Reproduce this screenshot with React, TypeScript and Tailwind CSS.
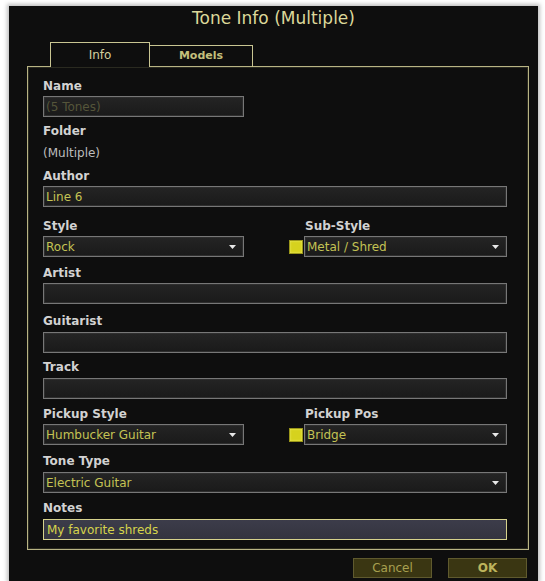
import React from "react";

const font = { fontFamily: '"DejaVu Sans", Verdana, sans-serif' };

function Label({ children, className = "" }: { children: React.ReactNode; className?: string }) {
  return (
    <div className={`h-[14px] leading-[14px] text-[12px] font-bold text-[#d2d2d2] ${className}`}>{children}</div>
  );
}

function Field({
  value = "",
  select = false,
  className = "",
  textClass = "text-[#c4c354]",
}: {
  value?: string;
  select?: boolean;
  className?: string;
  textClass?: string;
}) {
  return (
    <div
      className={`relative h-[21px] border border-[#777] bg-gradient-to-b from-[#242424] to-[#1a1a1a] shadow-[inset_0_0_0_1px_#2e2e2e] flex items-center pl-[2px] ${className}`}
    >
      <span className={`text-[12px] leading-[14px] ${textClass}`}>{value}</span>
      {select && (
        <svg className="absolute right-[7px] top-[8px]" width="7" height="4" viewBox="0 0 7 4">
          <polygon points="0,0 7,0 3.5,4" fill="#e8e8e8" />
        </svg>
      )}
    </div>
  );
}

function Check() {
  return (
    <div className="w-[14px] h-[14px] mr-[1px] bg-[#d6d21e] border border-[#9a961a] shadow-[inset_0_0_2px_#f4f27a] shrink-0" />
  );
}

export default function App() {
  return (
    <div className="w-[545px] h-[581px] bg-white pl-[9px] pt-[6px] flex overflow-hidden" style={font}>
      <div className="w-[529px] h-[575px] bg-[#0e0e0e] shadow-[0_0_4px_2px_rgba(0,0,0,0.25)] flex flex-col pl-[18px]">
        <div className="h-[25px] leading-[25px] text-center text-[17px] text-[#dcd89a] pr-[18px]">
          Tone Info (Multiple)
        </div>
        <div className="flex items-end ml-[23px] mt-[11px] relative z-10 -mb-px">
          <div className="w-[100px] h-[25px] border border-b-0 border-[#c9c592] bg-[#0e0e0e] text-center text-[12px] leading-[24px] text-[#d4d09e]">
            Info
          </div>
          <div className="w-[103px] h-[22px] border-t border-r border-[#c9c592] text-center text-[11px] leading-[20px] font-bold text-[#c4c07c]">
            Models
          </div>
        </div>
        <div className="w-[502px] h-[484px] border border-[#b8b484] shadow-[inset_0_0_0_1px_#2a2a20] bg-[#0e0e0e] pl-[15px] pr-[21px] pt-[12px] flex flex-col">
          <Label>Name</Label>
          <Field className="w-[201px] mt-[3px]" value="(5 Tones)" textClass="text-[#55553a]" />
          <Label className="mt-[7px]">Folder</Label>
          <div className="h-[14px] leading-[14px] text-[12px] text-[#bdbdbd] mt-[8px]">(Multiple)</div>
          <Label className="mt-[9px]">Author</Label>
          <Field className="mt-[3px]" value="Line 6" />
          <div className="flex mt-[12px]">
            <div className="w-[201px] flex flex-col">
              <Label>Style</Label>
              <Field className="mt-[3px]" value="Rock" select />
            </div>
            <div className="flex-1 flex flex-col pl-[45px]">
              <Label className="pl-[16px]">Sub-Style</Label>
              <div className="flex items-center mt-[3px]">
                <Check />
                <Field className="flex-1" value="Metal / Shred" select />
              </div>
            </div>
          </div>
          <Label className="mt-[9px]">Artist</Label>
          <Field className="mt-[3px]" />
          <Label className="mt-[10px]">Guitarist</Label>
          <Field className="mt-[4px]" />
          <Label className="mt-[7px]">Track</Label>
          <Field className="mt-[4px]" />
          <div className="flex mt-[8px]">
            <div className="w-[201px] flex flex-col">
              <Label>Pickup Style</Label>
              <Field className="mt-[3px]" value="Humbucker Guitar" select />
            </div>
            <div className="flex-1 flex flex-col pl-[45px]">
              <Label className="pl-[16px]">Pickup Pos</Label>
              <div className="flex items-center mt-[3px]">
                <Check />
                <Field className="flex-1" value="Bridge" select />
              </div>
            </div>
          </div>
          <Label className="mt-[9px]">Tone Type</Label>
          <Field className="mt-[4px]" value="Electric Guitar" select />
          <Label className="mt-[8px]">Notes</Label>
          <div className="mt-[4px] h-[21px] border border-[#d6d28c] bg-gradient-to-b from-[#3c3c4a] to-[#34343f] flex items-center pl-[3px]">
            <span className="text-[12px] leading-[14px] text-[#d6d44c]">My favorite shreds</span>
          </div>
        </div>
        <div className="flex justify-end gap-[16px] mt-[8px] pr-[11px]">
          <div className="w-[79px] h-[20px] bg-[#3a3612] border border-[#5f5a2e] text-center text-[12px] leading-[18px] text-[#a8a050]">
            Cancel
          </div>
          <div className="w-[79px] h-[20px] bg-[#3a3612] border border-[#5f5a2e] text-center text-[12px] leading-[18px] text-[#bcb45c] font-bold">
            OK
          </div>
        </div>
      </div>
    </div>
  );
}
